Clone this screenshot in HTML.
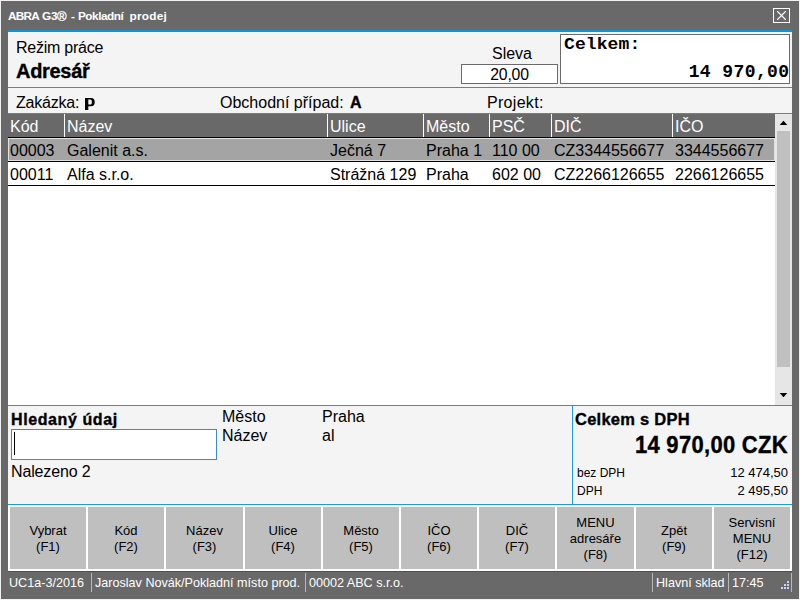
<!DOCTYPE html>
<html><head><meta charset="utf-8">
<style>
*{margin:0;padding:0;box-sizing:border-box}
html,body{width:800px;height:600px;overflow:hidden}
body{position:relative;background:#696969;font-family:"Liberation Sans",sans-serif;color:#000}
.a{position:absolute}
.t{position:absolute;white-space:pre;line-height:1}
.b{font-weight:bold;-webkit-text-stroke:0.35px currentColor}
.w{color:#fff}
.m{font-family:"Liberation Mono",monospace;-webkit-text-stroke:0}
</style></head><body>
<div class="a" style="left:0px;top:0px;width:800px;height:1px;background:#f0f0f0;"></div>
<div class="a" style="left:0px;top:0px;width:1px;height:600px;background:#f0f0f0;"></div>
<div class="a" style="left:799px;top:0px;width:1px;height:600px;background:#f0f0f0;"></div>
<div class="a" style="left:0px;top:599px;width:800px;height:1px;background:#f0f0f0;"></div>
<div class="t b w" style="left:8px;top:11px;font-size:11.8px;-webkit-text-stroke:0;letter-spacing:-0.8px">ABRA</div>
<div class="t b w" style="left:42px;top:11px;font-size:11.8px;-webkit-text-stroke:0;letter-spacing:-0.3px">G3</div>
<div class="t b w" style="left:71px;top:11px;font-size:11.8px;-webkit-text-stroke:0;letter-spacing:0px">-</div>
<div class="t b w" style="left:78px;top:11px;font-size:11.8px;-webkit-text-stroke:0;letter-spacing:-0.5px">Pokladní</div>
<div class="t b w" style="left:129.5px;top:11px;font-size:11.8px;-webkit-text-stroke:0;letter-spacing:0.25px">prodej</div>
<div class="t w" style="left:57px;top:10px;font-size:13px;-webkit-text-stroke:0.3px #fff">®</div>
<div class="a" style="left:773px;top:8px;width:17px;height:15px;border:1px solid #fff"></div>
<svg class="a" style="left:773px;top:8px" width="17" height="15"><path d="M4.5 3.5 L12.5 11.5 M12.5 3.5 L4.5 11.5" stroke="#fff" stroke-width="1.1" stroke-linecap="round" fill="none"/></svg>
<div class="a" style="left:8px;top:30px;width:784px;height:2px;background:#0f96d6;"></div>
<div class="a" style="left:8px;top:32px;width:784px;height:55px;background:#f4f4f4;"></div>
<div class="t " style="left:16px;top:40px;font-size:16px;letter-spacing:-0.25px">Režim práce</div>
<div class="t b" style="left:16px;top:61px;font-size:20px;letter-spacing:-0.3px">Adresář</div>
<div class="t " style="left:470px;top:46px;font-size:16px;width:84px;text-align:center">Sleva</div>
<div class="a" style="left:461px;top:64px;width:97px;height:20px;background:#fff;border:1px solid #6a6a6a"></div>
<div class="t " style="left:461px;top:67px;font-size:15.8px;width:97px;text-align:center;letter-spacing:-0.2px">20,00</div>
<div class="a" style="left:560px;top:34px;width:230px;height:50px;background:#fff;border:1px solid #6a6a6a"></div>
<div class="t b m" style="left:564px;top:37px;font-size:18px;letter-spacing:0.1px;transform:scaleY(0.89);transform-origin:0 0">Celkem:</div>
<div class="t b m" style="left:561px;top:63px;font-size:18px;width:228.5px;text-align:right;letter-spacing:0.4px">14 970,00</div>
<div class="a" style="left:8px;top:87px;width:784px;height:1px;background:#1e9ad6;"></div>
<div class="a" style="left:8px;top:88px;width:784px;height:25px;background:#f4f4f4;"></div>
<div class="t " style="left:16px;top:95px;font-size:16px;letter-spacing:-0.2px">Zakázka:</div>
<svg class="a" style="left:80px;top:92px" width="20" height="22"><path fill-rule="evenodd" fill="#000" d="M5 6 H11 C13.5 6 14.7 7.5 14.7 9.8 V10.4 C14.7 12.7 13.5 14.2 11 14.2 H8.3 V18 H5 Z M8.3 7.6 V12.6 H10.4 C11.4 12.6 11.8 11.8 11.8 10.8 V9.4 C11.8 8.3 11.4 7.6 10.4 7.6 Z"/></svg>
<div class="t " style="left:220px;top:95px;font-size:16px;">Obchodní případ:</div>
<div class="t b" style="left:350px;top:95px;font-size:16px;">A</div>
<div class="t " style="left:487px;top:95px;font-size:16px;letter-spacing:0.3px">Projekt:</div>
<div class="a" style="left:8px;top:113px;width:784px;height:1px;background:#1e9ad6;"></div>
<div class="a" style="left:8px;top:114px;width:767px;height:291px;background:#fff;"></div>
<div class="a" style="left:8px;top:114px;width:767px;height:23px;background:#696969;"></div>
<div class="a" style="left:64px;top:114px;width:1px;height:23px;background:#fff;"></div>
<div class="a" style="left:327px;top:114px;width:1px;height:23px;background:#fff;"></div>
<div class="a" style="left:423px;top:114px;width:1px;height:23px;background:#fff;"></div>
<div class="a" style="left:489px;top:114px;width:1px;height:23px;background:#fff;"></div>
<div class="a" style="left:551px;top:114px;width:1px;height:23px;background:#fff;"></div>
<div class="a" style="left:672px;top:114px;width:1px;height:23px;background:#fff;"></div>
<div class="t w" style="left:10px;top:119px;font-size:16px;">Kód</div>
<div class="t w" style="left:67px;top:119px;font-size:16px;">Název</div>
<div class="t w" style="left:330px;top:119px;font-size:16px;">Ulice</div>
<div class="t w" style="left:426px;top:119px;font-size:16px;">Město</div>
<div class="t w" style="left:492px;top:119px;font-size:16px;">PSČ</div>
<div class="t w" style="left:554px;top:119px;font-size:16px;">DIČ</div>
<div class="t w" style="left:675px;top:119px;font-size:16px;">IČO</div>
<div class="a" style="left:8px;top:137px;width:767px;height:1px;background:#000;"></div>
<div class="a" style="left:8px;top:138px;width:767px;height:23px;background:#a4a4a4;border:1px solid #e0e0e0"></div>
<div class="a" style="left:8px;top:161px;width:767px;height:1px;background:#000;"></div>
<div class="a" style="left:8px;top:185px;width:767px;height:1px;background:#000;"></div>
<div class="t " style="left:10px;top:143px;font-size:16px;">00003</div>
<div class="t " style="left:67px;top:143px;font-size:16px;">Galenit a.s.</div>
<div class="t " style="left:330px;top:143px;font-size:16px;">Ječná 7</div>
<div class="t " style="left:426px;top:143px;font-size:16px;">Praha 1</div>
<div class="t " style="left:492px;top:143px;font-size:16px;">110 00</div>
<div class="t " style="left:554px;top:143px;font-size:16px;">CZ3344556677</div>
<div class="t " style="left:675px;top:143px;font-size:16px;">3344556677</div>
<div class="t " style="left:10px;top:167px;font-size:16px;">00011</div>
<div class="t " style="left:67px;top:167px;font-size:16px;">Alfa s.r.o.</div>
<div class="t " style="left:330px;top:167px;font-size:16px;">Strážná 129</div>
<div class="t " style="left:426px;top:167px;font-size:16px;">Praha</div>
<div class="t " style="left:492px;top:167px;font-size:16px;">602 00</div>
<div class="t " style="left:554px;top:167px;font-size:16px;">CZ2266126655</div>
<div class="t " style="left:675px;top:167px;font-size:16px;">2266126655</div>
<div class="a" style="left:775px;top:114px;width:17px;height:291px;background:#e6e6e6;"></div>
<div class="a" style="left:777px;top:131px;width:13px;height:236px;background:#c0c0c0;"></div>
<svg class="a" style="left:775px;top:114px" width="17" height="291"><path d="M4.7 11 L12.3 11 L8.5 6.7 Z" fill="#000"/><path d="M4.7 279 L12.3 279 L8.5 283.2 Z" fill="#000"/></svg>
<div class="a" style="left:8px;top:405px;width:784px;height:1px;background:#1e9ad6;"></div>
<div class="a" style="left:8px;top:406px;width:784px;height:98px;background:#f4f4f4;"></div>
<div class="a" style="left:572px;top:405px;width:1px;height:99px;background:#1e9ad6;"></div>
<div class="t b" style="left:11px;top:412px;font-size:16px;letter-spacing:0.6px">Hledaný údaj</div>
<div class="a" style="left:11px;top:429px;width:206px;height:31px;background:#fff;border:1px solid #3c8cc3"></div>
<div class="a" style="left:14px;top:432px;width:1px;height:23px;background:#000;"></div>
<div class="t " style="left:11px;top:464px;font-size:16px;letter-spacing:-0.15px">Nalezeno 2</div>
<div class="t " style="left:222px;top:409px;font-size:16px;">Město</div>
<div class="t " style="left:222px;top:428px;font-size:16px;">Název</div>
<div class="t " style="left:322px;top:409px;font-size:16px;">Praha</div>
<div class="t " style="left:322px;top:428px;font-size:16px;">al</div>
<div class="t b" style="left:575px;top:411px;font-size:16.5px;letter-spacing:0.25px">Celkem s DPH</div>
<div class="t b" style="left:560px;top:434.2px;font-size:22px;width:228px;text-align:right;letter-spacing:0.3px;transform:scaleY(1.05);transform-origin:0 4px">14 970,00 CZK</div>
<div class="t " style="left:577px;top:467px;font-size:12px;">bez DPH</div>
<div class="t " style="left:577px;top:485px;font-size:12px;">DPH</div>
<div class="t " style="left:560px;top:466px;font-size:13px;width:228px;text-align:right">12 474,50</div>
<div class="t " style="left:560px;top:484px;font-size:13px;width:228px;text-align:right">2 495,50</div>
<div class="a" style="left:8px;top:504px;width:784px;height:1px;background:#1e9ad6;"></div>
<div class="a" style="left:8px;top:505px;width:784px;height:66px;background:#fff;"></div>
<div class="a" style="left:8px;top:571px;width:784px;height:1px;background:#0f6196;"></div>
<div class="a" style="left:10px;top:507px;width:76px;height:62px;padding-top:2px;background:#bfbfbf;display:flex;align-items:center;justify-content:center;text-align:center;font-size:13px;line-height:16px">Vybrat<br>(F1)</div>
<div class="a" style="left:88px;top:507px;width:76px;height:62px;padding-top:2px;background:#bfbfbf;display:flex;align-items:center;justify-content:center;text-align:center;font-size:13px;line-height:16px">Kód<br>(F2)</div>
<div class="a" style="left:166px;top:507px;width:77px;height:62px;padding-top:2px;background:#bfbfbf;display:flex;align-items:center;justify-content:center;text-align:center;font-size:13px;line-height:16px">Název<br>(F3)</div>
<div class="a" style="left:245px;top:507px;width:76px;height:62px;padding-top:2px;background:#bfbfbf;display:flex;align-items:center;justify-content:center;text-align:center;font-size:13px;line-height:16px">Ulice<br>(F4)</div>
<div class="a" style="left:323px;top:507px;width:76px;height:62px;padding-top:2px;background:#bfbfbf;display:flex;align-items:center;justify-content:center;text-align:center;font-size:13px;line-height:16px">Město<br>(F5)</div>
<div class="a" style="left:401px;top:507px;width:76px;height:62px;padding-top:2px;background:#bfbfbf;display:flex;align-items:center;justify-content:center;text-align:center;font-size:13px;line-height:16px">IČO<br>(F6)</div>
<div class="a" style="left:479px;top:507px;width:76px;height:62px;padding-top:2px;background:#bfbfbf;display:flex;align-items:center;justify-content:center;text-align:center;font-size:13px;line-height:16px">DIČ<br>(F7)</div>
<div class="a" style="left:557px;top:507px;width:77px;height:62px;padding-top:2px;background:#bfbfbf;display:flex;align-items:center;justify-content:center;text-align:center;font-size:13px;line-height:16px">MENU<br>adresáře<br>(F8)</div>
<div class="a" style="left:636px;top:507px;width:76px;height:62px;padding-top:2px;background:#bfbfbf;display:flex;align-items:center;justify-content:center;text-align:center;font-size:13px;line-height:16px">Zpět<br>(F9)</div>
<div class="a" style="left:714px;top:507px;width:76px;height:62px;padding-top:2px;background:#bfbfbf;display:flex;align-items:center;justify-content:center;text-align:center;font-size:13px;line-height:16px">Servisní<br>MENU<br>(F12)</div>
<div class="t w" style="left:9px;top:577px;font-size:12.6px;">UC1a-3/2016</div>
<div class="t w" style="left:95px;top:577px;font-size:12.6px;">Jaroslav Novák/Pokladní místo prod.</div>
<div class="t w" style="left:309px;top:577px;font-size:12.6px;">00002 ABC s.r.o.</div>
<div class="t w" style="left:656px;top:577px;font-size:12.6px;">Hlavní sklad</div>
<div class="t w" style="left:732px;top:577px;font-size:12.6px;">17:45</div>
<div class="a" style="left:91px;top:573px;width:1px;height:19px;background:#b8b8b8;"></div>
<div class="a" style="left:305px;top:573px;width:1px;height:19px;background:#b8b8b8;"></div>
<div class="a" style="left:652px;top:573px;width:1px;height:19px;background:#b8b8b8;"></div>
<div class="a" style="left:728px;top:573px;width:1px;height:19px;background:#b8b8b8;"></div>
<div class="a" style="left:791px;top:573px;width:1px;height:19px;background:#b8b8b8;"></div>
<svg class="a" style="left:780px;top:580px" width="10" height="10"><rect x="7" y="1" width="2" height="2" fill="#c8d4ff"/><rect x="4" y="4" width="2" height="2" fill="#c8d4ff"/><rect x="7" y="4" width="2" height="2" fill="#c8d4ff"/><rect x="1" y="7" width="2" height="2" fill="#c8d4ff"/><rect x="4" y="7" width="2" height="2" fill="#c8d4ff"/><rect x="7" y="7" width="2" height="2" fill="#c8d4ff"/></svg>
</body></html>
